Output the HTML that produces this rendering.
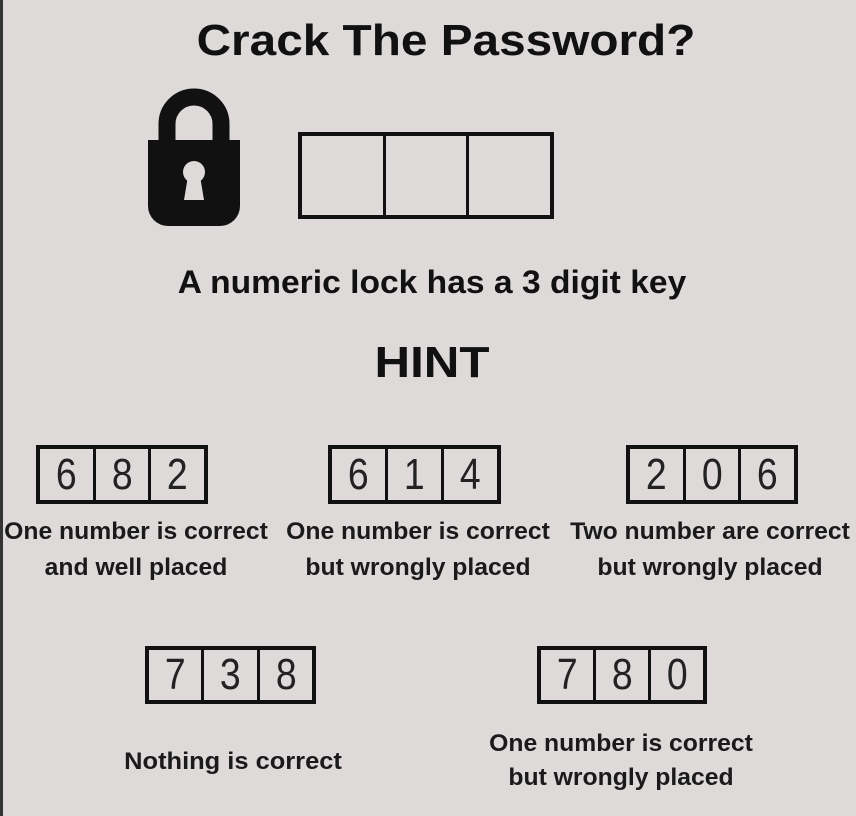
<!DOCTYPE html>
<html><head><meta charset="utf-8"><style>
html,body{margin:0;padding:0}
body{width:856px;height:816px;background:#dddad9;position:relative;overflow:hidden;font-family:"Liberation Sans",sans-serif;color:#111}
.t{position:absolute;white-space:nowrap;text-align:center;transform-origin:center center}
.box{position:absolute;border:4px solid #111;box-sizing:border-box;display:flex}
.box div{flex:1;display:flex;align-items:center;justify-content:center;font-size:44px;font-weight:normal;color:#222;border-left:3px solid #111;line-height:1;transform:scaleX(0.85)}
.box div{transform:none}
.box div span{display:inline-block;transform:scaleX(0.85)}
.box div:first-child{border-left:none}
.cap{font-size:24px;font-weight:bold;transform:scaleX(1.03);color:#1a1a1a}
</style></head><body>
<div style="position:absolute;left:0;top:0;width:3px;height:816px;background:#333"></div>
<div class="t" style="left:0;width:892px;top:16px;font-size:44px;font-weight:bold;transform:scaleX(1.085)">Crack The Password?</div>
<svg style="position:absolute;left:146px;top:86px" width="96" height="142" viewBox="0 0 96 142">
<path d="M21 58 V38 A27 27 0 0 1 75 38 V58" fill="none" stroke="#111" stroke-width="17"/>
<path d="M2 54 H94 V120 A20 20 0 0 1 74 140 H22 A20 20 0 0 1 2 120 Z" fill="#111"/>
<circle cx="48" cy="86" r="11" fill="#dddad9"/>
<path d="M42 90 L38 114 H58 L54 90 Z" fill="#dddad9"/>
</svg>
<div class="box" style="left:298px;top:132px;width:256px;height:87px"><div></div><div></div><div></div></div>
<div class="t" style="left:0;width:864px;top:264px;font-size:32px;font-weight:bold;transform:scaleX(1.05)">A numeric lock has a 3 digit key</div>
<div class="t" style="left:0;width:864px;top:338px;font-size:44px;font-weight:bold;transform:scaleX(1.12)">HINT</div>

<div class="box" style="left:36px;top:445px;width:172px;height:59px"><div><span>6</span></div><div><span>8</span></div><div><span>2</span></div></div>
<div class="box" style="left:328px;top:445px;width:173px;height:59px"><div><span>6</span></div><div><span>1</span></div><div><span>4</span></div></div>
<div class="box" style="left:626px;top:445px;width:172px;height:59px"><div><span>2</span></div><div><span>0</span></div><div><span>6</span></div></div>

<div class="t cap" style="left:-64px;width:400px;top:518px">One number is correct</div>
<div class="t cap" style="left:-64px;width:400px;top:554px">and well placed</div>
<div class="t cap" style="left:218px;width:400px;top:518px">One number is correct</div>
<div class="t cap" style="left:218px;width:400px;top:554px">but wrongly placed</div>
<div class="t cap" style="left:510px;width:400px;top:518px">Two number are correct</div>
<div class="t cap" style="left:510px;width:400px;top:554px">but wrongly placed</div>

<div class="box" style="left:145px;top:646px;width:171px;height:58px"><div><span>7</span></div><div><span>3</span></div><div><span>8</span></div></div>
<div class="box" style="left:537px;top:646px;width:170px;height:58px"><div><span>7</span></div><div><span>8</span></div><div><span>0</span></div></div>

<div class="t cap" style="left:33px;width:400px;top:748px;transform:scaleX(1.06)">Nothing is correct</div>
<div class="t cap" style="left:421px;width:400px;top:730px">One number is correct</div>
<div class="t cap" style="left:421px;width:400px;top:764px">but wrongly placed</div>
</body></html>
